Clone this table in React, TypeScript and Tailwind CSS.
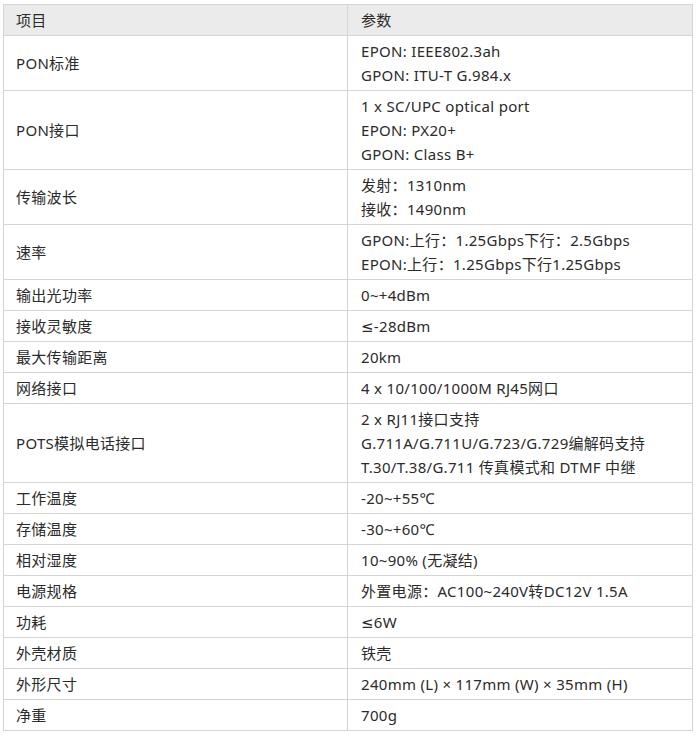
const rows: [string, string[]][] = [
  ['PON标准', ['EPON: IEEE802.3ah', 'GPON: ITU-T G.984.x']],
  ['PON接口', ['1 x SC/UPC optical port', 'EPON: PX20+', 'GPON: Class B+']],
  ['传输波长', ['发射：1310nm', '接收：1490nm']],
  ['速率', ['GPON:上行：1.25Gbps下行：2.5Gbps', 'EPON:上行：1.25Gbps下行1.25Gbps']],
  ['输出光功率', ['0~+4dBm']],
  ['接收灵敏度', ['≤-28dBm']],
  ['最大传输距离', ['20km']],
  ['网络接口', ['4 x 10/100/1000M RJ45网口']],
  ['POTS模拟电话接口', ['2 x RJ11接口支持', 'G.711A/G.711U/G.723/G.729编解码支持', 'T.30/T.38/G.711 传真模式和 DTMF 中继']],
  ['工作温度', ['-20~+55℃']],
  ['存储温度', ['-30~+60℃']],
  ['相对湿度', ['10~90% (无凝结)']],
  ['电源规格', ['外置电源：AC100~240V转DC12V 1.5A']],
  ['功耗', ['≤6W']],
  ['外壳材质', ['铁壳']],
  ['外形尺寸', ['240mm (L) × 117mm (W) × 35mm (H)']],
  ['净重', ['700g']],
];

export default function App() {
  return (
    <div className="bg-white pl-[3px] pt-[4px] w-[697px] h-[735px] font-['Noto_Sans','DejaVu_Sans','Noto_Sans_CJK_SC',sans-serif] text-[15px] leading-[24px] tracking-[0.3px] text-[#2b2b2b]">
      <table className="w-[690px] border-collapse table-fixed">
        <thead>
          <tr className="bg-[#ebebeb]">
            <th className="w-[344px] border border-[#d5d5d5] px-[12px] py-[3px] text-left font-normal">项目</th>
            <th className="border border-[#d5d5d5] px-[13px] py-[3px] text-left font-normal">参数</th>
          </tr>
        </thead>
        <tbody>
          {rows.map(([name, vals]) => (
            <tr key={name}>
              <td className="border border-[#d5d5d5] px-[12px] py-[3px] align-middle">{name}</td>
              <td className="border border-[#d5d5d5] px-[13px] py-[3px]">
                {vals.map((v) => (
                  <div key={v}>{v}</div>
                ))}
              </td>
            </tr>
          ))}
        </tbody>
      </table>
    </div>
  );
}
